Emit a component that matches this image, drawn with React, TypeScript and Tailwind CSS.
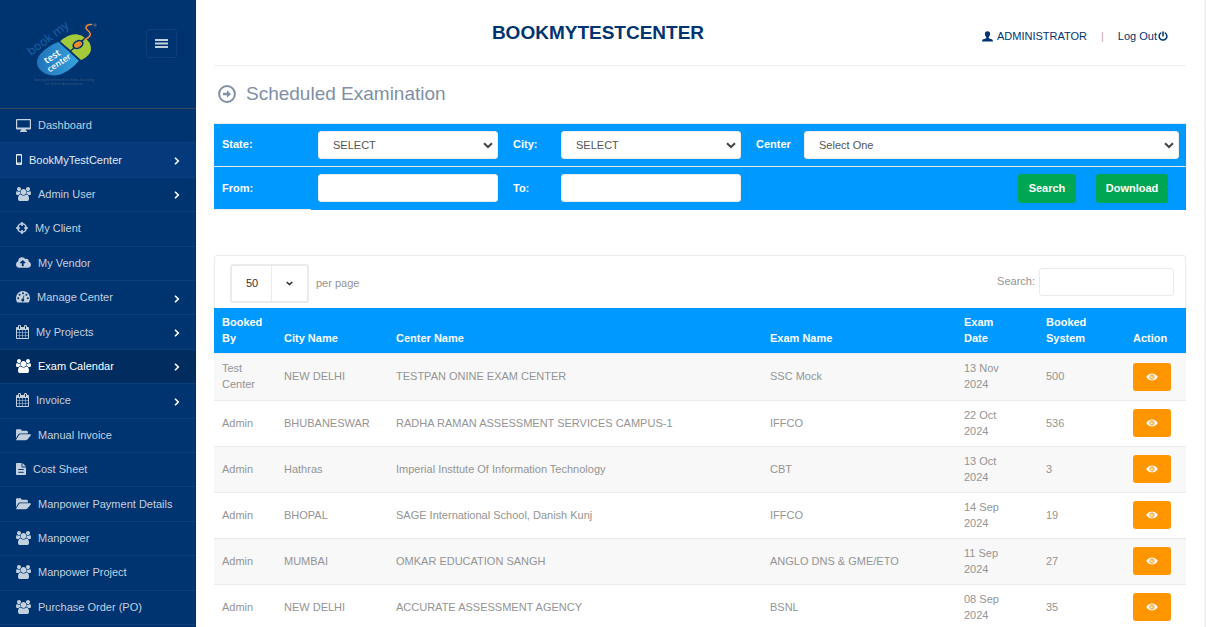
import React from 'react';
import { FaCloudUploadAlt } from 'react-icons/fa';

type IconProps = { className?: string };

const Users = ({ className }: IconProps) => (
  <svg viewBox="0 0 1920 1792" width="15" height="14" fill="currentColor" className={className} aria-hidden="true">
    <path d="M593 896q-162 5-265 128h-134q-82 0-138-40.5t-56-118.500q0-353 124-353 6 0 43.500 21t97.500 42.500 119 21.500q67 0 133-23-5 37-5 66 0 139 81 256zM1664 1533q0 120-73 189.500t-194 69.500h-874q-121 0-194-69.500t-73-189.500q0-53 3.500-103.500t14-109 26.500-108.500 43-97.500 62-81 85.500-53.500 111.500-20q10 0 43 21.500t73 48 107 48 135 21.500 135-21.500 107-48 73-48 43-21.500q61 0 111.500 20t85.500 53.500 62 81 43 97.500 26.500 108.500 14 109 3.500 103.500zM640 256q0 106-75 181t-181 75-181-75-75-181 75-181 181-75 181 75 75 181zM1344 640q0 159-112.500 271.500t-271.500 112.500-271.500-112.500-112.500-271.500 112.500-271.500 271.500-112.500 271.500 112.500 112.500 271.500zM1920 865q0 78-56 118.500t-138 40.500h-134q-103-123-265-128 81-117 81-256 0-29-5-66 66 23 133 23 59 0 119-21.500t97.500-42.500 43.500-21q124 0 124 353zM1792 256q0 106-75 181t-181 75-181-75-75-181 75-181 181-75 181 75 75 181z" />
  </svg>
);

const CalendarGrid = () => (
  <svg viewBox="0 0 1664 1792" width="13" height="14" fill="currentColor" aria-hidden="true">
    <path d="M192 1664h288v-288h-288v288zm352 0h320v-288h-320v288zm-352-352h288v-320h-288v320zm352 0h320v-320h-320v320zm-352-384h288v-288h-288v288zm736 736h320v-288h-320v288zm-384-736h320v-288h-320v288zm768 736h288v-288h-288v288zm-384-352h320v-320h-320v320zm-352-864v-288q0-13-9.500-22.500t-22.500-9.500h-64q-13 0-22.500 9.500t-9.500 22.500v288q0 13 9.500 22.500t22.500 9.500h64q13 0 22.500-9.500t9.500-22.500zm736 864h288v-320h-288v320zm-384-384h320v-288h-320v288zm384 0h288v-288h-288v288zm32-480v-288q0-13-9.500-22.500t-22.500-9.500h-64q-13 0-22.500 9.500t-9.500 22.500v288q0 13 9.500 22.500t22.500 9.500h64q13 0 22.500-9.500t9.500-22.500zm384-64v1280q0 52-38 90t-90 38h-1408q-52 0-90-38t-38-90v-1280q0-52 38-90t90-38h128v-96q0-66 47-113t113-47h64q66 0 113 47t47 113v96h384v-96q0-66 47-113t113-47h64q66 0 113 47t47 113v96h128q52 0 90 38t38 90z" transform="translate(-64 0)" />
  </svg>
);

const Monitor = () => (
  <svg viewBox="0 0 15 13" width="15" height="13" fill="currentColor" aria-hidden="true">
    <path fillRule="evenodd" d="M1 0h13a1 1 0 0 1 1 1v8.500a1 1 0 0 1-1 1H9.500c.2.800.7 1.300 1.500 1.500v1H4v-1c.8-.2 1.300-.7 1.500-1.500H1a1 1 0 0 1-1-1V1a1 1 0 0 1 1-1zm.2 1.200v7.300h12.600V1.200z" />
  </svg>
);

const Mobile = () => (
  <svg viewBox="0 0 6 11" width="6" height="11" fill="currentColor" aria-hidden="true">
    <path fillRule="evenodd" d="M1 0h4a1 1 0 0 1 1 1v9a1 1 0 0 1-1 1H1a1 1 0 0 1-1-1V1a1 1 0 0 1 1-1zm0 1.500v7h4v-7zM2.600 9.300v.8h.8v-.8z" />
  </svg>
);

const FolderOpen = () => (
  <svg viewBox="0 0 15 12" width="15" height="12" fill="currentColor" aria-hidden="true">
    <path d="M0 9.200V1.500C0 .7.600.200 1.300.200h2.900c.7 0 1.300.5 1.300 1.300v.3h5c.8 0 1.400.6 1.400 1.300v1.300H4.600c-1 0-2 .5-2.600 1.300z" />
    <path d="M4.600 5.300h9.600c.8 0 1 .6.500 1.200l-2.800 3.600c-.5.7-1.300 1.200-2.200 1.200H.900c-.7 0-.9-.5-.5-1.100l2.300-3.700c.4-.8 1.100-1.200 1.900-1.200z" />
  </svg>
);

const Crosshairs = () => (
  <svg viewBox="0 0 12 12" width="12" height="12" fill="none" stroke="currentColor" strokeWidth="1.600" aria-hidden="true">
    <circle cx="6" cy="6" r="4.200" />
    <path d="M6 0v4M6 8v4M0 6h4M8 6h4" />
  </svg>
);

const Gauge = () => (
  <svg viewBox="0 0 14 12" width="14" height="12" aria-hidden="true">
    <path fill="currentColor" d="M7 0a7 7 0 0 1 7 7c0 1.500-.4 3-1.100 4.200-.2.300-.4.400-.8.400H1.900c-.4 0-.6-.1-.8-.4A7.800 7.800 0 0 1 0 7a7 7 0 0 1 7-7z" />
    <g fill="#003471">
      <circle cx="2.200" cy="7.200" r="1" />
      <circle cx="3.600" cy="3.700" r="1" />
      <circle cx="7" cy="2.200" r="1" />
      <circle cx="10.400" cy="3.700" r="1" />
      <circle cx="11.800" cy="7.200" r="1" />
      <circle cx="6.800" cy="9" r="1.500" />
    </g>
    <path d="M7 8.500l.9-4" stroke="#003471" strokeWidth=".8" />
  </svg>
);

const FileText = () => (
  <svg viewBox="0 0 10 12" width="10" height="12" aria-hidden="true">
    <path fill="currentColor" d="M.7 0H5.500v3.800c0 .4.300.7.700.7H10v6.800c0 .4-.3.700-.7.700H.7c-.4 0-.7-.3-.7-.7V.7C0 .3.300 0 .7 0zM6.400 0L10 3.600H6.400z" />
    <path d="M2.300 6.500h5.400M2.300 9.300h5.400" stroke="#003471" />
  </svg>
);

const Chevron = ({ className }: IconProps) => (
  <svg viewBox="0 0 6 8" width="6" height="8" fill="none" stroke="currentColor" strokeWidth="1.600" className={className} aria-hidden="true">
    <path d="M1 .8L4.300 4 1 7.200" />
  </svg>
);

const Down = ({ className }: IconProps) => (
  <svg viewBox="0 0 10 7" fill="none" stroke="currentColor" strokeWidth="2" className={className} aria-hidden="true">
    <path d="M1 1.200L5 5l4-3.800" />
  </svg>
);

const Eye = () => (
  <svg viewBox="0 0 12 8" width="12" height="8" aria-hidden="true">
    <path fill="#fff" d="M6 .5C2.700.5.300 3.600.300 4S2.700 7.500 6 7.500 11.700 4.400 11.700 4 9.300.5 6 .5z" />
    <circle cx="6" cy="4" r="2.100" fill="none" stroke="#ff9600" />
    <path d="M6 2.800V4h1.200" fill="none" stroke="#ff9600" strokeWidth=".7" />
  </svg>
);

const Person = () => (
  <svg viewBox="0 0 11 11" width="11" height="11" fill="currentColor" aria-hidden="true">
    <path d="M5.500.3c1.700 0 2.700 1.100 2.600 2.700-.1 1.500-.6 2.400-1.300 3.100-.2.700 0 1.200.7 1.500 1.700.6 3.200.9 3.400 2.100v.9H.1v-.9c.2-1.200 1.700-1.500 3.400-2.100.7-.3.900-.8.700-1.500C3.500 5.400 3 4.500 2.900 3 2.800 1.400 3.800.3 5.500.3z" />
  </svg>
);

const Power = () => (
  <svg viewBox="0 0 10 10" width="10" height="10" fill="none" stroke="currentColor" strokeWidth="1.500" strokeLinecap="round" aria-hidden="true">
    <path d="M2.800 2A3.900 3.900 0 1 0 7.200 2M5 .9v4" />
  </svg>
);

const Logo = () => (
  <svg viewBox="20 15 84 75" width="84" height="75" role="img" aria-label="Book my test center">
    <defs>
      <linearGradient id="shell" x1="0" y1="0" x2="1" y2="0">
        <stop offset="0" stopColor="#2273ba" />
        <stop offset="1" stopColor="#35a3e0" />
      </linearGradient>
    </defs>
    <path fill="url(#shell)" d="M58.500 42L79 60.500c-4 5.500-13 12.500-20 14.300-7 1.600-14.500 0-19-5-4.500-5-3.800-11 .5-16 5-5.500 11-9.500 18-11.800z" />
    <path fill="#a4ca39" d="M60 41.500c5-4.500 11.500-8 17.500-7 3 .4 5 1.500 7 3.200L71 50.500z" />
    <path fill="#a4ca39" d="M85 38.500c4.500 2.500 6.500 7 5.800 12-1 4-5 7.500-9.800 9.500L71 51z" />
    <path fill="none" stroke="#003471" strokeWidth="1.200" d="M58.800 41L80 60.800M70.500 51l15-13" />
    <ellipse cx="78" cy="44.500" rx="6" ry="4.200" transform="rotate(-28 78 44.500)" fill="#003471" />
    <ellipse cx="78" cy="44.500" rx="4.200" ry="2.700" transform="rotate(-28 78 44.500)" fill="#f08b2c" />
    <path d="M85 39.500c3-1.500 6.500-3.500 5-6.500s-5-3.500-4-6 3.500-2.700 5.500-2.500" fill="none" stroke="#f08b2c" strokeWidth="1.500" strokeLinecap="round" />
    <circle cx="95" cy="25" r="1.700" fill="#41587c" />
    <g className="font-['Open_Sans',sans-serif]">
      <text transform="translate(31 56) rotate(-37)" fontSize="12" fill="#1b62a8">book my</text>
      <text transform="translate(46.500 64) rotate(-33)" fontSize="9.500" fontWeight="600" fill="#fff">test</text>
      <text transform="translate(49.500 72.500) rotate(-33)" fontSize="8.500" fontWeight="600" fill="#fff">center</text>
      <text x="64" y="81" fontSize="3.500" textAnchor="middle" fill="#41587c">Setting Benchmark in Video Scouting</text>
      <text x="64" y="85" fontSize="3.500" textAnchor="middle" fill="#41587c">for Online Assessments</text>
    </g>
  </svg>
);

type NavItem = { label: string; icon: React.ReactNode; sub?: boolean; tone?: 'open' | 'active' };

const nav: NavItem[] = [
  { label: 'Dashboard', icon: <Monitor /> },
  { label: 'BookMyTestCenter', icon: <Mobile />, sub: true, tone: 'open' },
  { label: 'Admin User', icon: <Users />, sub: true },
  { label: 'My Client', icon: <Crosshairs /> },
  { label: 'My Vendor', icon: <FaCloudUploadAlt size={15} /> },
  { label: 'Manage Center', icon: <Gauge />, sub: true },
  { label: 'My Projects', icon: <CalendarGrid />, sub: true },
  { label: 'Exam Calendar', icon: <Users />, sub: true, tone: 'active' },
  { label: 'Invoice', icon: <CalendarGrid />, sub: true },
  { label: 'Manual Invoice', icon: <FolderOpen /> },
  { label: 'Cost Sheet', icon: <FileText /> },
  { label: 'Manpower Payment Details', icon: <FolderOpen /> },
  { label: 'Manpower', icon: <Users /> },
  { label: 'Manpower Project', icon: <Users /> },
  { label: 'Purchase Order (PO)', icon: <Users /> },
];

const tones = {
  plain: 'text-[#c3d0de]',
  open: 'bg-[#043a7b] text-[#e3ebf3]',
  active: 'bg-[#002c60] text-white',
};

const rows = [
  ['Test Center', 'NEW DELHI', 'TESTPAN ONINE EXAM CENTER', 'SSC Mock', '13 Nov 2024', '500'],
  ['Admin', 'BHUBANESWAR', 'RADHA RAMAN ASSESSMENT SERVICES CAMPUS-1', 'IFFCO', '22 Oct 2024', '536'],
  ['Admin', 'Hathras', 'Imperial Insttute Of Information Technology', 'CBT', '13 Oct 2024', '3'],
  ['Admin', 'BHOPAL', 'SAGE International School, Danish Kunj', 'IFFCO', '14 Sep 2024', '19'],
  ['Admin', 'MUMBAI', 'OMKAR EDUCATION SANGH', 'ANGLO DNS & GME/ETO', '11 Sep 2024', '27'],
  ['Admin', 'NEW DELHI', 'ACCURATE ASSESSMENT AGENCY', 'BSNL', '08 Sep 2024', '35'],
];

const field = 'h-7 w-full rounded-[3px] border border-[#ebebeb] bg-white text-[#555]';

function Picker({ id, value }: { id: string; value: string }) {
  return (
    <div className="relative">
      <select id={id} className={`${field} appearance-none pl-3.5 pr-6`}>
        <option>{value}</option>
      </select>
      <Down className="pointer-events-none absolute right-[5px] top-[11px] h-[7px] w-[10px] text-[#444]" />
    </div>
  );
}

export default function App() {
  return (
    <div className="flex h-screen overflow-hidden border-r-2 border-[#f1f1f1] bg-white font-['Liberation_Sans',Arial,sans-serif] text-[11px] leading-4 text-[#949494]">
      <aside className="w-[196px] shrink-0 bg-[#003471]">
        <div className="flex h-[108px] items-start justify-between pl-5 pr-[19px]">
          <a href="#home" className="mt-[15px]"><Logo /></a>
          <button type="button" aria-label="Toggle menu" className="mt-[29px] flex h-[29px] w-[31px] items-center justify-center rounded-[3px] border border-[#0d3f7b] text-[#c3d0de]">
            <svg viewBox="0 0 13 9" width="13" height="9" fill="currentColor" aria-hidden="true">
              <path d="M0 0h13v2H0zM0 3.500h13v2H0zM0 7h13v2H0z" />
            </svg>
          </button>
        </div>
        <nav className="grid min-h-[517px] auto-rows-fr border-t border-[#33475f]">
          {nav.map((item) => (
            <a key={item.label} href="#menu" className={`flex items-center border-b border-[#0b3e7c] px-4 pb-px ${tones[item.tone ?? 'plain']}`}>
              {item.icon}
              <span className="ml-[7px]">{item.label}</span>
              {item.sub && <Chevron className="ml-auto mt-[3px] text-white" />}
            </a>
          ))}
        </nav>
      </aside>

      <main className="min-w-0 flex-1 px-[18px]">
        <header className="flex h-[66px] items-center border-b border-[#eee] pr-[18px] text-[#003471]">
          <h1 className="flex-1 text-center text-[19px] font-bold leading-6">BOOKMYTESTCENTER</h1>
          <div className="mt-[7px] flex items-center">
            <a href="#profile" className="flex items-center gap-1"><Person />ADMINISTRATOR</a>
            <span className="mx-3.5 text-[#c9ab98]">|</span>
            <a href="#logout" className="flex items-center gap-px">Log Out<Power /></a>
          </div>
        </header>

        <h2 className="mt-4 flex items-center gap-2.5 pl-1 text-[19px] leading-6 text-[#7f8fa6]">
          <svg viewBox="0 0 18 18" width="18" height="18" aria-hidden="true">
            <circle cx="9" cy="9" r="7.900" fill="none" stroke="currentColor" strokeWidth="2" />
            <path fill="currentColor" d="M5 7.800h4V5.200L13 9l-4 3.800v-2.600H5z" />
          </svg>
          Scheduled Examination
        </h2>

        <form className="mt-[17px] border-t border-[#ebebeb] font-bold text-white" onSubmit={(e) => e.preventDefault()}>
          <div className="grid grid-cols-[104px_180px_63px_180px_63px_1fr] items-center border-b border-[#ebebeb] bg-[#0099ff] py-[7px] pr-[7px]">
            <label htmlFor="state" className="pb-[3px] pl-2">State:</label>
            <div className="font-normal"><Picker id="state" value="SELECT" /></div>
            <label htmlFor="city" className="pb-[3px] pl-[15px]">City:</label>
            <div className="font-normal"><Picker id="city" value="SELECT" /></div>
            <label htmlFor="center" className="pb-[3px] pl-[15px]">Center</label>
            <div className="font-normal"><Picker id="center" value="Select One" /></div>
          </div>
          <div className="grid grid-cols-[104px_180px_63px_180px_1fr] items-start bg-[#0099ff] pr-[18px]">
            <div className="mr-[7px] flex items-center self-stretch border-b border-[#ebebeb]">
              <label htmlFor="from" className="pl-2">From:</label>
            </div>
            <input id="from" type="text" className={`${field} mt-[7px] px-3 font-normal`} />
            <label htmlFor="to" className="self-center pb-px pl-[15px]">To:</label>
            <input id="to" type="text" className={`${field} mt-[7px] px-3 font-normal`} />
            <div className="my-[7px] flex justify-end gap-5">
              <button type="submit" className="h-[29px] w-[58px] rounded-[3px] bg-[#00a651] pb-px font-bold">Search</button>
              <button type="button" className="h-[29px] w-[72px] rounded-[3px] bg-[#00a651] pb-px font-bold">Download</button>
            </div>
          </div>
        </form>

        <section className="mt-[45px]">
          <div className="flex h-[53px] justify-between rounded-t-[3px] border border-b-0 border-[#ebebeb] pl-[15px] pr-[11px]">
            <div className="mt-2 flex h-[39px] items-center">
              <span className="relative mr-[7px] block h-full w-[79px]">
                <select id="page-size" className="h-full w-full appearance-none rounded-[3px] border-2 border-[#ebebeb] bg-white pb-px pl-3.5 text-[#333]">
                  <option>50</option>
                </select>
                <span className="pointer-events-none absolute inset-y-0.5 right-0.5 flex w-9 items-center justify-center border-l border-[#ebebeb]">
                  <Down className="h-[5px] w-[7px] text-[#222]" />
                </span>
              </span>
              <label htmlFor="page-size" className="pb-0.5">per page</label>
            </div>
            <div className="mt-3 flex h-7 items-center gap-1">
              <label htmlFor="filter" className="pb-0.5">Search:</label>
              <input id="filter" type="search" className="h-7 w-[135px] rounded-[3px] border border-[#ebebeb] px-2" />
            </div>
          </div>
          <table className="w-full table-fixed border-collapse">
            <colgroup>
              <col className="w-[62px]" />
              <col className="w-[112px]" />
              <col />
              <col className="w-[194px]" />
              <col className="w-[82px]" />
              <col className="w-[87px]" />
              <col className="w-[61px]" />
            </colgroup>
            <thead>
              <tr className="h-[45px] border-b border-[#ebebeb] bg-[#0099ff] text-left align-bottom text-white [&>th]:pb-[7px] [&>th]:pl-2">
                <th>Booked By</th>
                <th>City Name</th>
                <th>Center Name</th>
                <th>Exam Name</th>
                <th><span className="block w-10">Exam Date</span></th>
                <th><span className="block w-12">Booked System</span></th>
                <th>Action</th>
              </tr>
            </thead>
            <tbody>
              {rows.map((row) => (
                <tr key={row[4]} className="h-[46px] border-b border-[#ebebeb] first:h-[47px] odd:bg-[#f8f8f8]">
                  {row.map((cell, i) => (
                    <td key={i} className="pb-px pl-2">{i === 4 ? <span className="block w-10">{cell}</span> : cell}</td>
                  ))}
                  <td className="pl-2">
                    <button type="button" aria-label="View" className="flex h-7 w-[38px] items-center justify-center rounded-[3px] bg-[#ff9600]">
                      <Eye />
                    </button>
                  </td>
                </tr>
              ))}
            </tbody>
          </table>
        </section>
      </main>
    </div>
  );
}
